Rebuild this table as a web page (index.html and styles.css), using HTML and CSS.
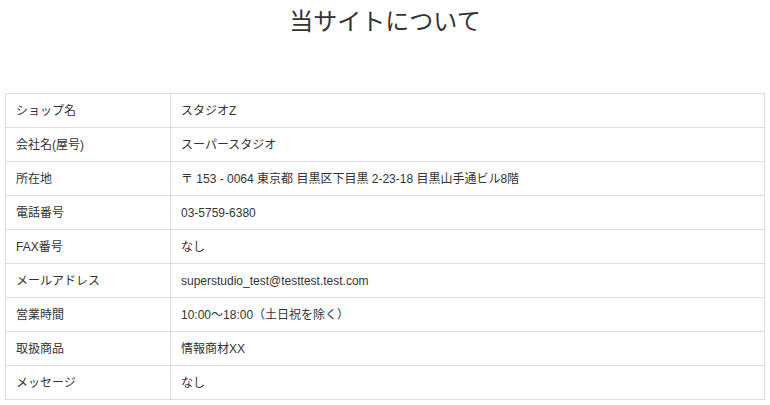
FILE: index.html
```html
<!DOCTYPE html>
<html lang="ja">
<head>
<meta charset="utf-8">
<title>当サイトについて</title>
<link rel="stylesheet" href="styles.css">
</head>
<body>
<main class="page">
  <h1 class="title">当サイトについて</h1>
  <table class="info">
    <tr><th>ショップ名</th><td>スタジオZ</td></tr>
    <tr><th>会社名(屋号)</th><td>スーパースタジオ</td></tr>
    <tr><th>所在地</th><td>〒 153 - 0064 東京都 目黒区下目黒 2-23-18 目黒山手通ビル8階</td></tr>
    <tr><th>電話番号</th><td>03-5759-6380</td></tr>
    <tr><th>FAX番号</th><td>なし</td></tr>
    <tr><th>メールアドレス</th><td>superstudio_test@testtest.test.com</td></tr>
    <tr><th>営業時間</th><td>10:00〜18:00（土日祝を除く）</td></tr>
    <tr><th>取扱商品</th><td>情報商材XX</td></tr>
    <tr><th>メッセージ</th><td>なし</td></tr>
  </table>
</main>
</body>
</html>
```
FILE: styles.css
```css
html, body {
  margin: 0;
  padding: 0;
  background: #fff;
}
body {
  font-family: "Liberation Sans", "Noto Sans CJK JP", sans-serif;
  color: #333;
}
.page {
  padding: 0 5px;
}
.title {
  margin: 0;
  padding-top: 3px;
  height: 93px;
  box-sizing: border-box;
  font-family: "Noto Sans CJK JP", sans-serif;
  font-weight: normal;
  font-size: 24px;
  line-height: 34px;
  text-align: center;
  color: #333;
}
.info {
  width: 760px;
  border-collapse: collapse;
  font-size: 12px;
}
.info th,
.info td {
  border: 1px solid #ddd;
  height: 34px;
  box-sizing: border-box;
  padding: 0 10px;
  text-align: left;
  font-weight: normal;
  line-height: 16px;
  vertical-align: middle;
}
.info th {
  width: 165px;
}
```
